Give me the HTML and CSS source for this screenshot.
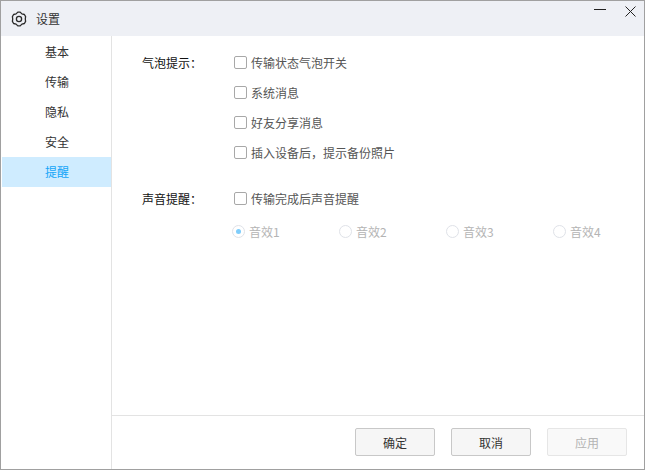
FILE: index.html
```html
<!DOCTYPE html>
<html lang="zh-CN">
<head>
<meta charset="utf-8">
<title>设置</title>
<link rel="stylesheet" href="styles.css">
</head>
<body>
<div class="window">
  <header class="titlebar">
    <svg class="gear" width="16" height="16" viewBox="0 0 16 16" fill="none" stroke="#2b2b2b" stroke-width="1.3" stroke-linejoin="round">
      <path d="M6.8 1.1H9.200L10.900 2.900 13.400 3.500 14.600 5.600 14.300 8 14.600 10.400 13.400 12.500 10.900 13.100 9.200 14.900H6.800L5.100 13.100 2.600 12.500 1.400 10.400 1.700 8 1.400 5.600 2.600 3.500 5.100 2.900z"/>
      <circle cx="8" cy="8" r="2.6"/>
    </svg>
    <span class="title">设置</span>
    <div class="winctl">
      <svg width="13" height="13" viewBox="0 0 13 13" stroke="#222" stroke-width="1" fill="none"><path d="M0 3.500h12"/></svg>
      <svg width="11" height="11" viewBox="0 0 11 11" stroke="#222" stroke-width="1" fill="none"><path d="M.5.5l10 10M10.500.5l-10 10"/></svg>
    </div>
  </header>
  <div class="body">
    <nav class="sidebar">
      <div class="nav-item">基本</div>
      <div class="nav-item">传输</div>
      <div class="nav-item">隐私</div>
      <div class="nav-item">安全</div>
      <div class="nav-item active">提醒</div>
    </nav>
    <div class="panel">
      <main class="content">
        <section class="group">
          <div class="group-label">气泡提示：</div>
          <div class="options">
            <label class="check"><span class="box"></span>传输状态气泡开关</label>
            <label class="check"><span class="box"></span>系统消息</label>
            <label class="check"><span class="box"></span>好友分享消息</label>
            <label class="check"><span class="box"></span>插入设备后，提示备份照片</label>
          </div>
        </section>
        <section class="group sound">
          <div class="group-label">声音提醒：</div>
          <div class="options">
            <label class="check"><span class="box"></span>传输完成后声音提醒</label>
            <div class="radios">
              <label class="radio"><span class="dot on"></span>音效1</label>
              <label class="radio"><span class="dot"></span>音效2</label>
              <label class="radio"><span class="dot"></span>音效3</label>
              <label class="radio"><span class="dot"></span>音效4</label>
            </div>
          </div>
        </section>
      </main>
      <footer class="footer">
        <button class="btn">确定</button>
        <button class="btn">取消</button>
        <button class="btn disabled">应用</button>
      </footer>
    </div>
  </div>
</div>
</body>
</html>
```
FILE: styles.css
```css
* { box-sizing: border-box; }
html, body { margin: 0; padding: 0; background: #fff; }
body {
  width: 645px;
  height: 470px;
  overflow: hidden;
  font-family: "Noto Sans CJK SC", "Liberation Sans", sans-serif;
  font-size: 12px;
  color: #333;
}
.window {
  width: 645px;
  height: 470px;
  border: 1px solid #a0a0a0;
  display: flex;
  flex-direction: column;
}
.titlebar {
  height: 35px;
  flex: none;
  background: #eef0f5;
  display: flex;
  align-items: center;
  padding-left: 10px;
}
.gear { flex: none; }
.title { margin-left: 9px; color: #333; }
.winctl {
  margin-left: auto;
  display: flex;
  align-items: flex-start;
  gap: 18px;
  padding-right: 8px;
  align-self: flex-start;
  padding-top: 5px;
}
.body { flex: 1; display: flex; min-height: 0; }
.sidebar {
  width: 111px;
  flex: none;
  border-right: 1px solid #e3e3e3;
  padding: 1px 0 0 1px;
}
.nav-item {
  height: 30px;
  display: flex;
  align-items: center;
  padding: 0 0 1px 43px;
  color: #333;
}
.nav-item.active { background: #cfecff; color: #14a5f8; }
.panel { flex: 1; display: flex; flex-direction: column; min-width: 0; }
.content { flex: 1; padding: 11px 0 0 30px; }
.group { display: flex; }
.group.sound { margin-top: 16px; }
.group-label { width: 92px; height: 30px; padding-top: 1px; line-height: 30px; color: #111; flex: none; }
.options { display: flex; flex-direction: column; flex: 1; }
.check {
  height: 30px;
  display: flex;
  align-items: center;
  color: #555;
}
.box {
  width: 13px;
  height: 13px;
  border: 1px solid #a8a8a8;
  border-radius: 2px;
  margin-right: 4px;
  background: #fff;
  flex: none;
}
.radios { display: flex; margin: 3px 0 0 -2px; }
.radio {
  width: 107px;
  height: 30px;
  display: flex;
  align-items: center;
  color: #b4b4b4;
}
.dot {
  width: 13px;
  height: 13px;
  border: 1px solid #dfe2e8;
  border-radius: 50%;
  margin-right: 4px;
  background: #fff;
  display: flex;
  align-items: center;
  justify-content: center;
  flex: none;
}
.dot.on::after {
  content: "";
  width: 5px;
  height: 5px;
  border-radius: 50%;
  background: #7fcdfb;
}
.footer {
  height: 54px;
  flex: none;
  border-top: 1px solid #e3e3e3;
  display: flex;
  justify-content: flex-end;
  gap: 16px;
  padding: 12px 17px 0 0;
}
.btn {
  width: 80px;
  height: 28px;
  border: 1px solid #c8c8c8;
  border-radius: 2px;
  background: #f6f6f6;
  font: inherit;
  color: #333;
  padding: 0;
}
.btn.disabled { border-color: #e6e6e6; background: #f9f9f9; color: #b4b4b4; }
```
